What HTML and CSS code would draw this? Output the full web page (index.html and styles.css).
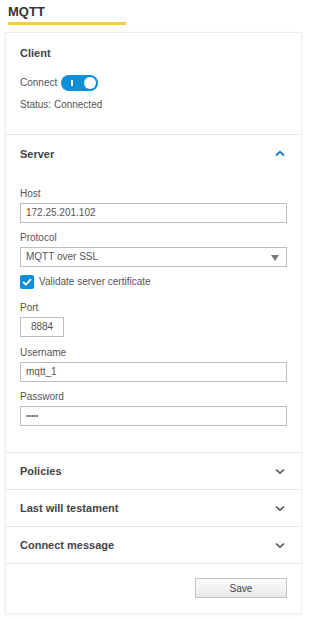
FILE: index.html
```html
<!DOCTYPE html>
<html lang="en">
<head>
  <meta charset="UTF-8">
  <meta name="viewport" content="width=device-width, initial-scale=1.0">
  <title>MQTT</title>
  <link rel="stylesheet" href="styles.css">
</head>
<body>
  <div class="page-title">MQTT</div>

  <main class="card">
    <section class="section client">
      <h3 class="section-title">Client</h3>
      <div class="connect-row">
        <span>Connect</span>
        <span class="toggle"><span class="toggle-mark"></span><span class="toggle-knob"></span></span>
      </div>
      <p class="status">Status: Connected</p>
    </section>

    <section class="section server">
      <div class="section-head">
        <h3 class="section-title">Server</h3>
        <svg class="chevron up" width="10" height="7" viewBox="0 0 10 7"><path d="M1 5.5 L5 1.8 L9 5.5" fill="none" stroke="#1a7fc1" stroke-width="1.8"/></svg>
      </div>
      <div class="fields">
        <label class="field-label">Host</label>
        <div class="input wide">172.25.201.102</div>

        <label class="field-label">Protocol</label>
        <div class="input wide select">MQTT over SSL <span class="caret"></span></div>

        <div class="check-row">
          <span class="checkbox"><svg width="10" height="8" viewBox="0 0 10 8"><path d="M1 4 L4 6.5 L9 1.2" fill="none" stroke="#fff" stroke-width="1.8"/></svg></span>
          <span>Validate server certificate</span>
        </div>

        <label class="field-label">Port</label>
        <div class="input port">8884</div>

        <label class="field-label">Username</label>
        <div class="input wide">mqtt_1</div>

        <label class="field-label">Password</label>
        <div class="input wide pass">&bull;&bull;&bull;&bull;&bull;</div>
      </div>
    </section>

    <section class="section collapsed">
      <h3 class="section-title">Policies</h3>
      <svg class="chevron" width="10" height="7" viewBox="0 0 10 7"><path d="M1 1.5 L5 5.2 L9 1.5" fill="none" stroke="#555" stroke-width="1.6"/></svg>
    </section>
    <section class="section collapsed">
      <h3 class="section-title">Last will testament</h3>
      <svg class="chevron" width="10" height="7" viewBox="0 0 10 7"><path d="M1 1.5 L5 5.2 L9 1.5" fill="none" stroke="#555" stroke-width="1.6"/></svg>
    </section>
    <section class="section collapsed">
      <h3 class="section-title">Connect message</h3>
      <svg class="chevron" width="10" height="7" viewBox="0 0 10 7"><path d="M1 1.5 L5 5.2 L9 1.5" fill="none" stroke="#555" stroke-width="1.6"/></svg>
    </section>

    <div class="card-footer">
      <button class="btn-save">Save</button>
    </div>
  </main>
</body>
</html>
```
FILE: styles.css
```css
body {
  font-family: "Liberation Sans", Arial, sans-serif;
  margin: 0;
  padding: 0 0 6px 5px;
  background: #fff;
  color: #555;
  font-size: 10px;
  width: 297px;
}
.page-title {
  margin-left: 3px;
  padding-top: 4px;
  width: 118px;
  font-size: 13px;
  font-weight: bold;
  color: #333;
  line-height: 15px;
  padding-bottom: 3px;
  border-bottom: 3px solid #f7cd45;
}
.card {
  margin-top: 7px;
  border: 1px solid #ececec;
  box-shadow: 0 1px 3px rgba(0, 0, 0, 0.06);
  background: #fff;
}
.section {
  border-bottom: 1px solid #e9e9e9;
  padding: 0 14px;
}
.section-title {
  margin: 0;
  font-size: 11px;
  font-weight: bold;
  color: #444;
  line-height: 14px;
}
.client {
  padding-top: 13px;
  padding-bottom: 23px;
}
.connect-row {
  display: flex;
  align-items: center;
  gap: 4px;
  margin-top: 15px;
  line-height: 16px;
}
.toggle {
  position: relative;
  width: 37px;
  height: 16px;
  border-radius: 8px;
  background: #0c8ed9;
  display: inline-block;
}
.toggle-mark {
  position: absolute;
  left: 10px;
  top: 5px;
  width: 2px;
  height: 6px;
  background: #fff;
}
.toggle-knob {
  position: absolute;
  right: 2px;
  top: 2px;
  width: 12px;
  height: 12px;
  border-radius: 50%;
  background: #fff;
}
.status {
  margin: 8px 0 0;
  line-height: 12px;
}
.section-head {
  display: flex;
  align-items: center;
  justify-content: space-between;
  height: 37px;
}
.chevron {
  margin-right: 2px;
}
.server {
  padding-bottom: 26px;
}
.fields {
  display: flex;
  flex-direction: column;
  align-items: flex-start;
  padding-top: 16px;
}
.field-label {
  line-height: 12px;
  margin-bottom: 3px;
  color: #555;
}
.input {
  box-sizing: border-box;
  height: 20px;
  border: 1px solid #bdbdbd;
  padding: 0 5px;
  line-height: 18px;
  color: #555;
  margin-bottom: 9px;
  background: #fff;
}
.wide {
  width: 267px;
}
.select {
  position: relative;
  margin-bottom: 8px;
}
.caret {
  position: absolute;
  right: 7px;
  top: 7px;
  width: 0;
  height: 0;
  border-left: 4px solid transparent;
  border-right: 4px solid transparent;
  border-top: 6px solid #777;
}
.check-row {
  display: flex;
  align-items: center;
  gap: 5px;
  line-height: 14px;
  margin-bottom: 13px;
}
.checkbox {
  width: 14px;
  height: 14px;
  border-radius: 2px;
  background: #0c8ed9;
  display: flex;
  align-items: center;
  justify-content: center;
}
.port {
  width: 44px;
  text-align: center;
  margin-bottom: 10px;
}
.pass {
  font-size: 7px;
  letter-spacing: 0;
  margin-bottom: 0;
}
.collapsed {
  display: flex;
  align-items: center;
  justify-content: space-between;
  height: 36px;
}
.card-footer {
  display: flex;
  justify-content: flex-end;
  padding: 14px 14px 15px;
}
.btn-save {
  width: 92px;
  height: 20px;
  border: 1px solid #c4c4c4;
  background: linear-gradient(#fcfcfc, #e9e9e9);
  font-family: "Liberation Sans", Arial, sans-serif;
  font-size: 10px;
  color: #444;
  padding: 0;
}
```
